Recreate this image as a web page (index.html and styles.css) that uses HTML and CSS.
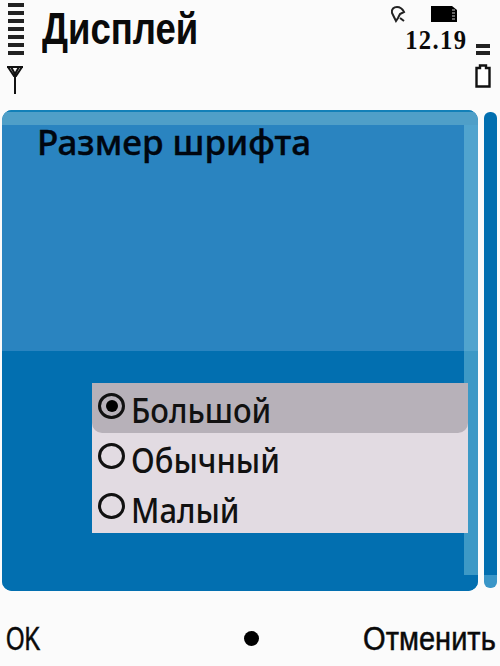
FILE: index.html
```html
<!DOCTYPE html>
<html lang="ru">
<head>
<meta charset="utf-8">
<title>Дисплей</title>
<link rel="stylesheet" href="styles.css">
</head>
<body>
<div class="screen">
  <header class="status">
    <div class="signal">
      <div class="bars"><i></i><i></i><i></i><i></i><i></i><i></i><i></i></div>
      <svg class="antenna" width="18" height="30" viewBox="0 0 18 30"><path d="M1 2H17M2 2L8 11H10L16 2M5 2L9 9L13 2M9 9V29" fill="none" stroke="#111" stroke-width="2"/></svg>
    </div>
    <h1 class="title"><span class="title-text">Дисплей</span></h1>
    <div class="clock-area">
      <div class="indicators">
        <svg width="18" height="18" viewBox="0 0 18 18"><path d="M3 8C2 4 5 2 8 2C11 2 13 3 15 7L11 9L9 13L7 16L5 12Z" fill="none" stroke="#222" stroke-width="2"/><path d="M11 13L15 16" stroke="#222" stroke-width="2"/></svg>
        <svg width="27" height="18" viewBox="0 0 27 18"><path d="M0 1H21L26 5V17H0Z" fill="#000"/><path d="M21 5H24M21 8H24M21 11H24M21 14H24" stroke="#ccc" stroke-width="1"/></svg>
      </div>
      <div class="clock">12.19</div>
    </div>
    <div class="power">
      <div class="level"><i></i><i></i></div>
      <svg width="16" height="24" viewBox="0 0 16 24"><path d="M5 1.5H11V4H14.5V22.5H1.5V4H5Z" fill="#fff" stroke="#111" stroke-width="2.4"/></svg>
    </div>
  </header>
  <main class="content">
    <section class="panel">
      <div class="panel-top"><h2 class="heading">Размер шрифта</h2></div>
      <div class="panel-bottom">
        <ul class="options">
          <li class="option selected"><span class="radio on"></span><span class="label">Большой</span></li>
          <li class="option"><span class="radio"></span><span class="label">Обычный</span></li>
          <li class="option"><span class="radio"></span><span class="label">Малый</span></li>
        </ul>
      </div>
      <div class="panel-strip"></div>
    </section>
    <div class="scrollbar"></div>
  </main>
  <footer class="softkeys">
    <span class="key key-ok">OK</span>
    <span class="dot"></span>
    <span class="key key-cancel">Отменить</span>
  </footer>
</div>
</body>
</html>
```

FILE: styles.css
```css
* { box-sizing: border-box; }
html, body { margin: 0; padding: 0; }
body { background: #fbfbfb; font-family: "Liberation Sans", sans-serif; color: #0a0a0a; }
.screen { width: 500px; height: 666px; display: flex; flex-direction: column; overflow: hidden; }
.status { height: 110px; display: flex; padding: 3px 4px 0 6px; flex: none; }
.signal { width: 20px; display: flex; flex-direction: column; flex: none; }
.bars { display: flex; flex-direction: column; gap: 4.5px; padding: 0 0 0 2px; }
.bars i { display: block; width: 16px; height: 3.5px; background: #222; }
.antenna { margin-top: 10px; }
.title { margin: 0 0 0 16px; font-size: 44px; line-height: 52px; font-weight: 700; flex: 1; }
.title-text { display: inline-block; transform: scaleX(0.83); transform-origin: left center; white-space: nowrap; }
.clock-area { width: 74px; display: flex; flex-direction: column; align-items: center; margin-right: 8px; }
.indicators { display: flex; gap: 24px; height: 23px; padding: 2px 0 0 0; margin-left: -11px; }
.clock { font-family: "Liberation Serif", serif; font-weight: 700; font-size: 28px; line-height: 24px; letter-spacing: 1.5px; transform: scaleX(0.88); margin: 2px 0 0 14px; }
.power { width: 18px; display: flex; flex-direction: column; align-items: center; padding-top: 41px; flex: none; margin-right: 4px; }
.level { display: flex; flex-direction: column; gap: 3px; margin-bottom: 9px; }
.level i { display: block; width: 14px; height: 4px; background: #222; }
.content { height: 481px; display: flex; padding-left: 2px; flex: none; }
.panel { width: 476px; position: relative; display: flex; flex-direction: column; border-radius: 10px; overflow: hidden; background: #0272b3; }
.panel-top { height: 241px; padding: 8px 0 0 35px; background: linear-gradient(#4f9fc8 0, #4f9fc8 13px, #2a84c0 13px); border-top: 2px solid #1280b8; flex: none; }
.heading { margin: 0; font-family: "Noto Sans", sans-serif; font-size: 35px; line-height: 44px; font-weight: 500; color: #00060f; white-space: nowrap; -webkit-text-stroke: 0.4px #00060f; }
.panel-bottom { flex: 1; padding: 32px 10px 0 90px; background: #026fb0; }
.options { list-style: none; margin: 0; padding: 0; background: #e2dbe2; width: 376px; height: 150px; position: relative; z-index: 1; }
.option { height: 50px; display: flex; align-items: center; padding-left: 6px; }
.selected { background: #b7b1b9; border-radius: 0 0 10px 10px; }
.radio { width: 27px; height: 26px; border: 3px solid #111; border-radius: 50%; flex: none; position: relative; top: -2px; display: flex; align-items: center; justify-content: center; }
.radio.on::after { content: ""; width: 12px; height: 12px; background: #000; border-radius: 50%; }
.label { margin-left: 6px; font-family: "Noto Sans", sans-serif; font-size: 34px; font-weight: 500; line-height: 50px; color: #111; position: relative; top: 2px; transform: scaleX(0.91); transform-origin: left center; white-space: nowrap; }
.panel-strip { position: absolute; top: 15px; right: 0; bottom: 16px; width: 14px; background: rgba(120, 195, 220, 0.5); }
.scrollbar { width: 13px; margin: 2px 0 3px 6px; background: linear-gradient(#026fb0 0, #026fb0 calc(100% - 13px), #3a96c8 calc(100% - 13px)); border-radius: 6px; }
.softkeys { flex: 1; display: flex; align-items: center; justify-content: space-between; padding: 20px 4px 0 6px; }
.key { font-size: 33px; line-height: 40px; white-space: nowrap; -webkit-text-stroke: 0.5px #0a0a0a; }
.key-ok { transform: scaleX(0.72); transform-origin: left center; }
.key-cancel { transform: scaleX(0.88); transform-origin: right center; }
.dot { width: 15px; height: 15px; background: #000; border-radius: 50%; margin-left: 104px; }
```
